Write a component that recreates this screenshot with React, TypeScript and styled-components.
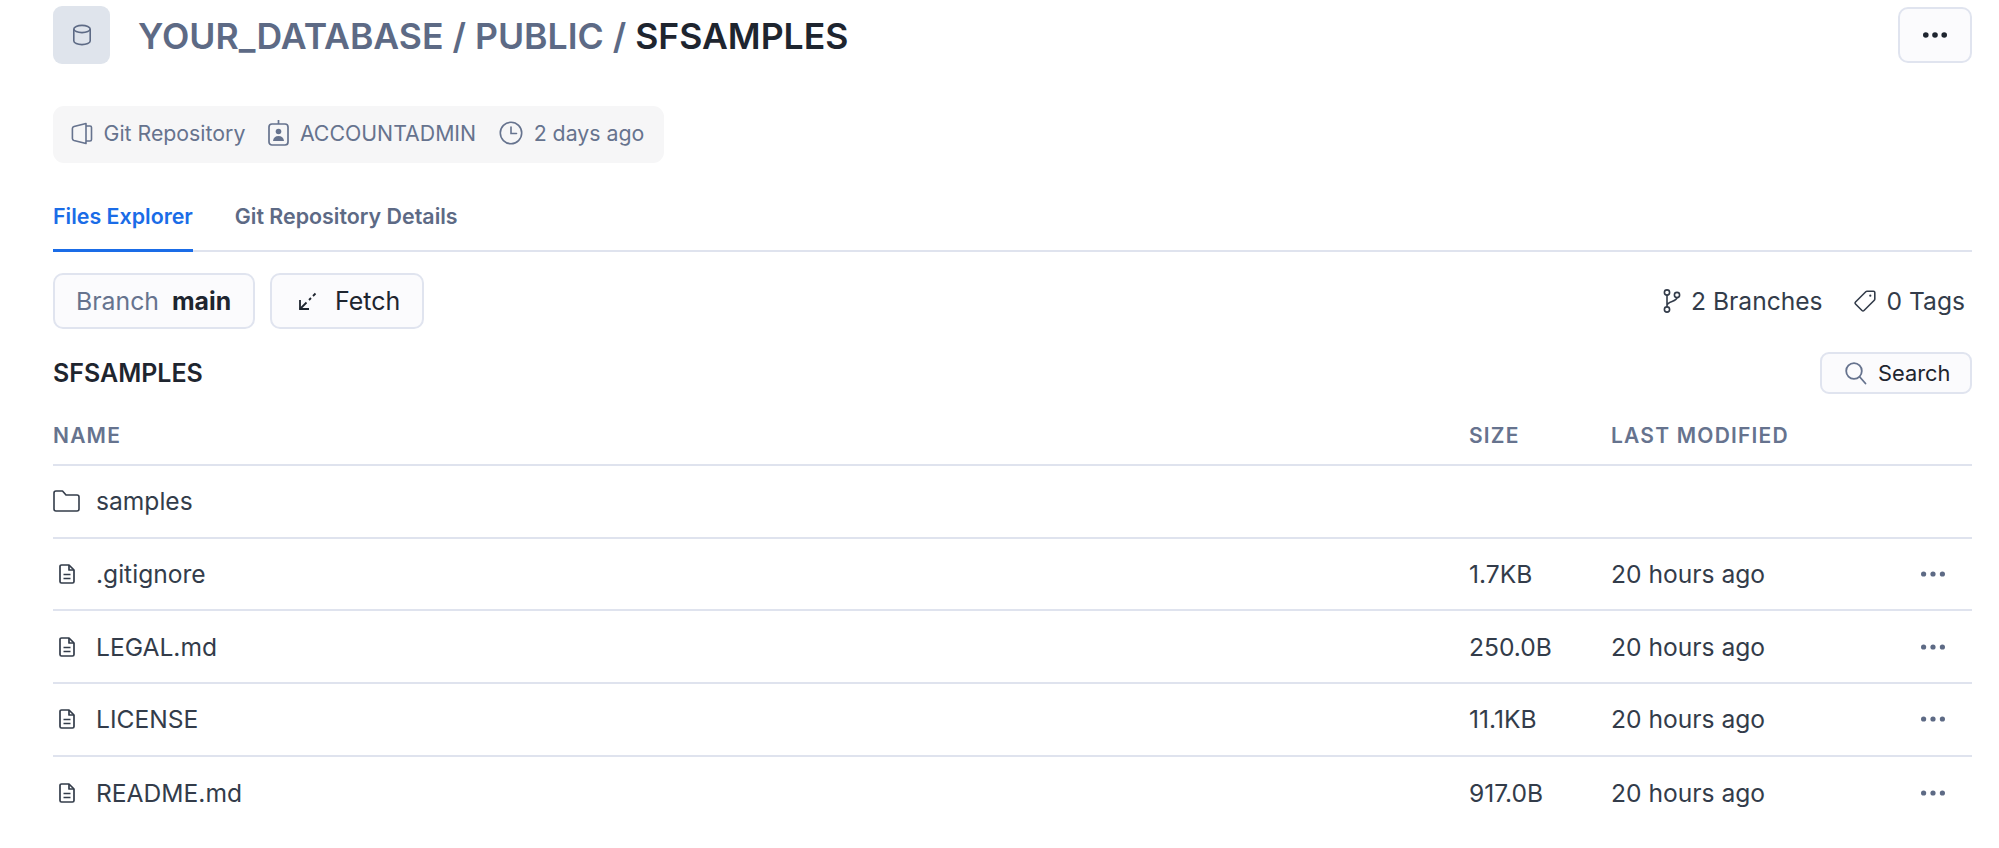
import React from "react";
import styled, { createGlobalStyle } from "styled-components";

const Global = createGlobalStyle`
  html, body { margin: 0; padding: 0; background: #fff; }
  body { font-family: Inter, "Liberation Sans", sans-serif; color: #1e252f; }
  * { box-sizing: border-box; }
`;

const Page = styled.div`
  width: 1999px;
  height: 848px;
  padding: 6px 27px 0 53px;
  overflow: hidden;
`;
const Header = styled.header`
  display: flex;
  align-items: center;
  height: 58px;
`;
const Tile = styled.div`
  width: 57px;
  height: 58px;
  border-radius: 9px;
  background: #dfe4ec;
  color: #5d6a85;
  display: flex;
  align-items: center;
  justify-content: center;
  margin-right: 28px;
`;
const Title = styled.h1`
  flex: 1;
  margin: 0;
  padding-top: 4px;
  font-size: 35.6px;
  line-height: 44px;
  font-weight: 600;
  color: #5d6a85;
  white-space: nowrap;
`;
const Strong = styled.span`
  color: #1e252f;
`;
const Button = styled.button`
  display: inline-flex;
  align-items: center;
  font-family: inherit;
  height: 56px;
  background: #fbfbfd;
  border: 2px solid #e0e4ef;
  border-radius: 10px;
  color: #1e252f;
  font-size: 25px;
  padding: 0;
`;
const MoreButton = styled(Button)`
  width: 74px;
  justify-content: center;
`;
const MetaRow = styled.div`
  display: flex;
`;
const Meta = styled.div`
  display: inline-flex;
  align-items: center;
  height: 57px;
  margin-top: 42px;
  padding: 0 20px 3px 18px;
  background: #f6f6f7;
  border-radius: 11px;
  color: #66738e;
  font-size: 21.3px;
  font-weight: 400;
`;
const MetaItem = styled.span`
  display: inline-flex;
  align-items: center;
  gap: 10.5px;
  margin-right: 23px;
  &:last-child { margin-right: 0; }
`;
const Tabs = styled.nav`
  display: flex;
  gap: 42px;
  height: 89px;
  padding-top: 24px;
  border-bottom: 2px solid #dfe3ee;
`;
const Tab = styled.div<{ $active?: boolean }>`
  height: 65px;
  padding-top: 16px;
  font-size: 21.4px;
  line-height: 26px;
  font-weight: 600;
  color: ${(p) => (p.$active ? "#1a6ce7" : "#5d6a85")};
  border-bottom: ${(p) => (p.$active ? "3px solid #1a6ce7" : "0")};
`;
const Toolbar = styled.div`
  display: flex;
  align-items: center;
  margin-top: 21px;
  gap: 15px;
`;
const BranchButton = styled(Button)`
  width: 202px;
  padding-left: 21px;
  gap: 13px;
  font-size: 24.8px;
`;
const Muted = styled.span`
  color: #66738e;
`;
const Bold = styled.span`
  font-weight: 700;
`;
const FetchButton = styled(Button)`
  width: 154px;
  padding-left: 26px;
  gap: 18px;
`;
const Stats = styled.div`
  margin-left: auto;
  display: flex;
  align-items: center;
  color: #333c4a;
  font-size: 24.6px;
  padding-right: 7px;
`;
const Stat = styled.span`
  display: inline-flex;
  align-items: center;
  gap: 10px;
  margin-left: 30px;
`;
const SubHeader = styled.div`
  display: flex;
  align-items: center;
  justify-content: space-between;
  margin-top: 23px;
  height: 42px;
`;
const FolderName = styled.h2`
  margin: 0;
  font-size: 25px;
  font-weight: 600;
  color: #1e252f;
`;
const SearchButton = styled(Button)`
  width: 152px;
  height: 42px;
  padding-left: 23px;
  gap: 11px;
  font-size: 21.8px;
  border-radius: 9px;
`;
const Grid = styled.div`
  display: grid;
  grid-template-columns: 1416px 142px 1fr 51px;
  align-items: center;
`;
const HeadRow = styled(Grid)`
  height: 72px;
  border-bottom: 2px solid #dfe3ee;
  color: #66738e;
  font-size: 21px;
  font-weight: 600;
  letter-spacing: 1.2px;
  padding-top: 12px;
`;
const Row = styled(Grid)`
  height: 72.7px;
  border-bottom: 2px solid #dfe3ee;
  font-size: 24.6px;
  color: #333c4a;
  &:last-child { border-bottom: 0; }
`;
const NameCell = styled.div`
  display: flex;
  align-items: center;
`;
const IconSlot = styled.span`
  width: 43px;
  display: inline-flex;
  align-items: center;
`;
const FileSlot = styled(IconSlot)`
  padding-left: 6px;
`;
const Actions = styled.div`
  color: #5d6a85;
  display: flex;
`;

const Cylinder = () => (
  <svg width="20" height="22" viewBox="0 0 20 22" fill="none" stroke="currentColor" strokeWidth="1.6">
    <ellipse cx="10" cy="5" rx="8.2" ry="3.6" />
    <path d="M1.8 5v12c0 2 3.7 3.6 8.2 3.6s8.2-1.6 8.2-3.6V5" />
  </svg>
);
const RepoIcon = () => (
  <svg width="22" height="23" viewBox="0 0 22 23" fill="none" stroke="currentColor" strokeWidth="1.6" strokeLinejoin="round">
    <path d="M15 1.5 3 4.5c-1 .3-1.6 1-1.6 2v10c0 1 .6 1.7 1.6 2l12 3z" />
    <path d="M15 4h4c.9 0 1.5.6 1.5 1.5v12c0 .9-.6 1.5-1.5 1.5h-4" />
  </svg>
);
const BadgeIcon = () => (
  <svg width="21" height="26" viewBox="0 0 21 26" fill="none" stroke="currentColor" strokeWidth="1.7">
    <rect x="1" y="4" width="19" height="21" rx="3" />
    <path d="M10.5 0v4" />
    <circle cx="10.5" cy="11.5" r="2.8" fill="currentColor" stroke="none" />
    <path d="M5 21c.4-3.2 2.4-5 5.5-5s5.1 1.800 5.500 5z" fill="currentColor" stroke="none" />
  </svg>
);
const ClockIcon = () => (
  <svg width="24" height="24" viewBox="0 0 24 24" fill="none" stroke="currentColor" strokeWidth="1.6" strokeLinecap="round">
    <circle cx="12" cy="12" r="10.7" />
    <path d="M12 6v6.500h5.500" />
  </svg>
);
const ArrowIcon = () => (
  <svg width="19" height="19" viewBox="0 0 19 19" fill="none" stroke="#1e252f" strokeWidth="1.8">
    <path d="M2 8v9h9" />
    <path d="M2 17l6.500-6.500" />
    <path d="M11 8l2-2M15 4l2.500-2.500" />
  </svg>
);
const BranchIcon = () => (
  <svg width="18" height="24" viewBox="0 0 18 24" fill="none" stroke="#333c4a" strokeWidth="1.6">
    <circle cx="4" cy="3.500" r="2.600" />
    <circle cx="4" cy="20.500" r="2.600" />
    <circle cx="14" cy="6" r="2.600" />
    <path d="M4 6.100v11.800M14 8.600c0 4.400-10 3.400-10 8" />
  </svg>
);
const TagIcon = () => (
  <svg width="24" height="24" viewBox="0 0 24 24" fill="none" stroke="#333c4a" strokeWidth="1.6" strokeLinejoin="round">
    <path d="M14 2.200h6.500c.8 0 1.300.5 1.300 1.300V10c0 .5-.2.9-.5 1.200L11 21.500c-.6.600-1.400.6-2 0l-6.500-6.500c-.6-.6-.6-1.400 0-2L12.800 2.700c.3-.3.700-.5 1.200-.5z" />
    <circle cx="17.300" cy="6.700" r="1.100" fill="#333c4a" stroke="none" />
  </svg>
);
const SearchIcon = () => (
  <svg width="22" height="23" viewBox="0 0 22 23" fill="none" stroke="#66738e" strokeWidth="1.8" strokeLinecap="round">
    <circle cx="9" cy="9" r="7.800" />
    <path d="M14.800 15l5.700 6.500" />
  </svg>
);
const FolderIcon = () => (
  <svg width="27" height="22" viewBox="0 0 27 22" fill="none" stroke="#333c4a" strokeWidth="1.600" strokeLinejoin="round">
    <path d="M1 3c0-1.100.8-2 2-2h6.500l3.500 4h11c1.200 0 2 .8 2 2v12c0 1.200-.8 2-2 2H3c-1.200 0-2-.8-2-2z" />
  </svg>
);
const FileIcon = () => (
  <svg width="16" height="20" viewBox="0 0 16 20" fill="none" stroke="#333c4a" strokeWidth="1.700" strokeLinejoin="round">
    <path d="M1 2.500C1 1.600 1.600 1 2.500 1H10l5 5v11.500c0 .9-.6 1.500-1.500 1.500h-11c-.9 0-1.500-.6-1.500-1.500z" />
    <path d="M10 1v5h5M4.500 10.500h7M4.500 14.500h7" />
  </svg>
);
const Dots = ({ r, w }: { r: number; w: number }) => (
  <svg width={w} height={8} viewBox={`0 0 ${w} 8`} fill="currentColor">
    <circle cx={r} cy="4" r={r} />
    <circle cx={w / 2} cy="4" r={r} />
    <circle cx={w - r} cy="4" r={r} />
  </svg>
);

const files = [
  { name: ".gitignore", size: "1.7KB" },
  { name: "LEGAL.md", size: "250.0B" },
  { name: "LICENSE", size: "11.1KB" },
  { name: "README.md", size: "917.0B" },
];

export default function App() {
  return (
    <Page>
      <Global />
      <Header>
        <Tile><Cylinder /></Tile>
        <Title>YOUR_DATABASE / PUBLIC / <Strong>SFSAMPLES</Strong></Title>
        <MoreButton aria-label="More"><Dots r={2.8} w={24} /></MoreButton>
      </Header>
      <MetaRow>
        <Meta>
          <MetaItem><RepoIcon />Git Repository</MetaItem>
          <MetaItem><BadgeIcon />ACCOUNTADMIN</MetaItem>
          <MetaItem><ClockIcon />2 days ago</MetaItem>
        </Meta>
      </MetaRow>
      <Tabs>
        <Tab $active>Files Explorer</Tab>
        <Tab>Git Repository Details</Tab>
      </Tabs>
      <Toolbar>
        <BranchButton><Muted>Branch</Muted><Bold>main</Bold></BranchButton>
        <FetchButton><ArrowIcon />Fetch</FetchButton>
        <Stats>
          <Stat><BranchIcon />2 Branches</Stat>
          <Stat><TagIcon />0 Tags</Stat>
        </Stats>
      </Toolbar>
      <SubHeader>
        <FolderName>SFSAMPLES</FolderName>
        <SearchButton><SearchIcon />Search</SearchButton>
      </SubHeader>
      <HeadRow>
        <div>NAME</div>
        <div>SIZE</div>
        <div>LAST MODIFIED</div>
        <div />
      </HeadRow>
      <Row>
        <NameCell><IconSlot><FolderIcon /></IconSlot>samples</NameCell>
        <div /><div /><div />
      </Row>
      {files.map((f) => (
        <Row key={f.name}>
          <NameCell><FileSlot><FileIcon /></FileSlot>{f.name}</NameCell>
          <div>{f.size}</div>
          <div>20 hours ago</div>
          <Actions><Dots r={2.6} w={24} /></Actions>
        </Row>
      ))}
    </Page>
  );
}
